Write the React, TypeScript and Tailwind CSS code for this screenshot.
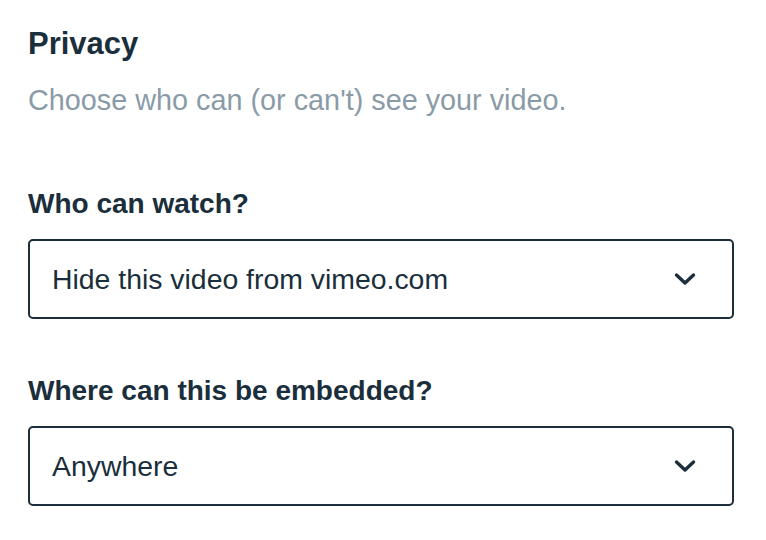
const FIELDS = [
  { label: 'Who can watch?', value: 'Hide this video from vimeo.com' },
  { label: 'Where can this be embedded?', value: 'Anywhere' },
];

function Chevron() {
  return (
    <svg width="22" height="14" viewBox="0 0 22 14" fill="none" className="shrink-0">
      <polyline points="2.5,3 11,11 19.5,3" stroke="#1a2e3b" strokeWidth="3.4" strokeLinecap="round" strokeLinejoin="round" />
    </svg>
  );
}

function Select({ value }: { value: string }) {
  return (
    <div className="flex items-center justify-between h-[80px] rounded-[5px] border-2 border-[#1a2e3b] pl-[22px] pr-[36px] bg-white">
      <span className="text-[28.4px] leading-none text-[#1a2e3b]">{value}</span>
      <Chevron />
    </div>
  );
}

export default function App() {
  return (
    <div className="w-[766px] h-[540px] bg-white pl-[28px] pr-[32px] pt-[26px] font-['Liberation_Sans',Arial,sans-serif]">
      {/* Header */}
      <h1 className="text-[31px] leading-9 font-bold text-[#1a2e3b]">Privacy</h1>
      <p className="mt-[20px] text-[28.8px] leading-9 text-[#8a9ba8]">Choose who can (or can't) see your video.</p>

      {/* Fields */}
      <div className="mt-[68px] flex flex-col gap-[54px]">
        {FIELDS.map((f, i) => (
          <div key={i}>
            <label className="block text-[28px] leading-9 font-bold text-[#1a2e3b]">{f.label}</label>
            <div className="mt-[17px]">
              <Select value={f.value} />
            </div>
          </div>
        ))}
      </div>
    </div>
  );
}
